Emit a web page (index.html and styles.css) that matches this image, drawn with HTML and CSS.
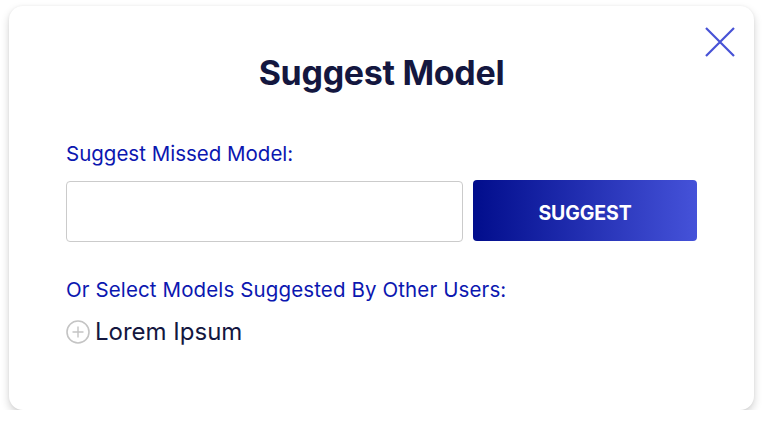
FILE: index.html
```html
<!DOCTYPE html>
<html>
<head>
<meta charset="utf-8">
<link rel="stylesheet" href="styles.css">
</head>
<body>
<div class="modal">
  <button class="close" aria-label="Close">
    <svg width="32" height="32" viewBox="0 0 32 32"><path d="M2 2 L30 30 M30 2 L2 30" stroke="#4752d6" stroke-width="2.2" fill="none"/></svg>
  </button>
  <h1 class="title">Suggest Model</h1>
  <div class="label">Suggest Missed Model:</div>
  <div class="row">
    <input class="field" type="text">
    <button class="suggest">SUGGEST</button>
  </div>
  <div class="label label-2">Or Select Models Suggested By Other Users:</div>
  <div class="option">
    <svg class="plus" width="24" height="24" viewBox="0 0 24 24"><circle cx="12" cy="12" r="11" fill="none" stroke="#c4c4c4" stroke-width="1.6"/><path d="M12 6.5 V17.5 M6.5 12 H17.5" stroke="#c4c4c4" stroke-width="1.4"/></svg>
    <span>Lorem Ipsum</span>
  </div>
</div>
</body>
</html>
```
FILE: styles.css
```css
* { box-sizing: border-box; }
html, body { margin: 0; padding: 0; background: #ffffff; }
body { font-family: "Inter", "Liberation Sans", sans-serif; }
.modal {
  position: relative;
  margin: 6px 10px 0 9px;
  width: 745px;
  height: 404px;
  background: #fff;
  border-radius: 14px;
  box-shadow: 0 4px 9px rgba(0,0,0,0.18), 0 0 3px rgba(0,0,0,0.05);
  padding: 48px 57px 0 57px;
}
.close {
  position: absolute;
  top: 20px;
  right: 18px;
  padding: 0;
  border: 0;
  background: none;
  width: 32px;
  height: 32px;
}
.close svg { display: block; }
.title {
  margin: 0;
  text-align: center;
  font-size: 34px;
  font-weight: 700;
  color: #14173f;
  line-height: 38px;
  letter-spacing: -0.3px;
}
.label {
  margin-top: 50px;
  font-size: 20.5px;
  color: #0b17b0;
  line-height: 24px;
}
.label-2 { margin-top: 36px; letter-spacing: 0.12px; }
.row {
  display: flex;
  gap: 10px;
  margin-top: 14px;
}
.field {
  width: 397px;
  height: 61px;
  border: 1px solid #cbcbcb;
  border-radius: 4px;
  margin-top: 1px;
}
.suggest {
  width: 224px;
  height: 61px;
  border: 0;
  border-radius: 4px;
  background: linear-gradient(90deg, #010d8c 0%, #4552d9 100%);
  color: #fff;
  font-family: "Inter", "Liberation Sans", sans-serif;
  font-weight: 700;
  font-size: 19.5px;
  letter-spacing: -0.1px;
  padding: 4px 0 0;
}
.option {
  display: flex;
  align-items: center;
  gap: 5px;
  margin-top: 15px;
  font-size: 24px;
  color: #14173f;
}
.plus { display: block; }
```
